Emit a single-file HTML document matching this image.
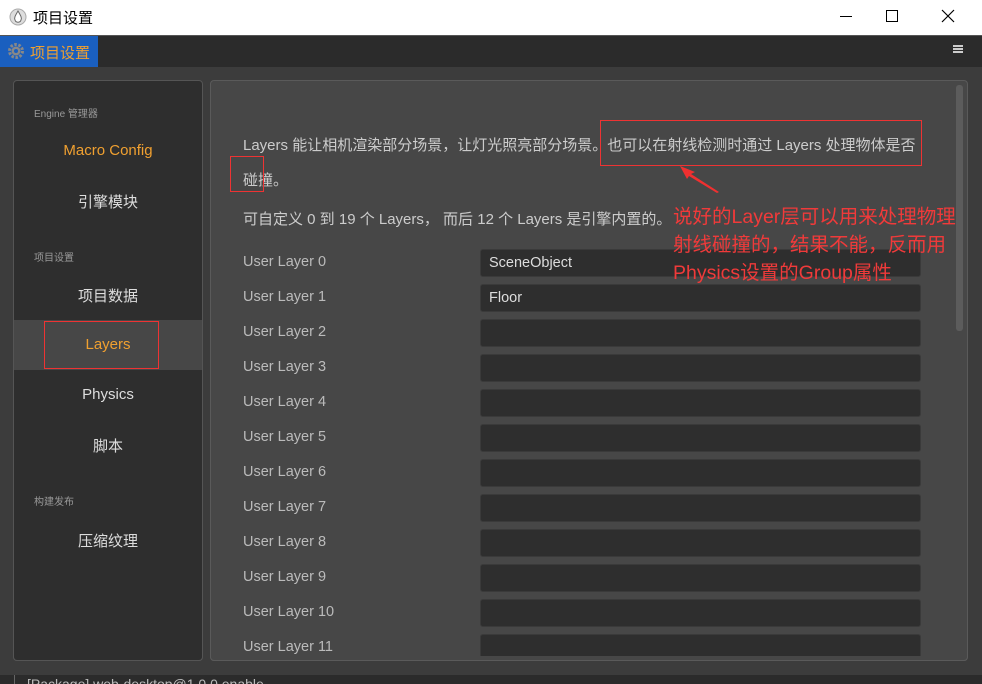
<!DOCTYPE html><html><head><meta charset="utf-8"><style>
*{margin:0;padding:0;box-sizing:border-box}
body{width:982px;height:684px;overflow:hidden;background:#3c3c3c;font-family:"Liberation Sans","Noto Sans CJK SC",sans-serif;position:relative}
.a{position:absolute}
.tb{left:0;top:0;width:982px;height:35px;background:#fff}
.tabs{left:0;top:35px;width:982px;height:32px;background:#2b2b2b;border-top:1px solid #555}
.left{left:13px;top:80px;width:190px;height:581px;background:#2e2e2e;border:1px solid #555;border-radius:4px}
.right{left:210px;top:80px;width:758px;height:581px;background:#474747;border:1px solid #5a5a5a;border-radius:4px}
.sec{font-size:10px;color:#999;left:34px}
.it{width:188px;left:14px;text-align:center;font-size:15px;color:#ddd}
.t{font-size:15px;color:#ccc;white-space:nowrap}
.lab{left:243px;font-size:14.5px;color:#bbb}
.in{left:480px;width:441px;height:28px;background:#2e2e2e;border:1px solid #3a3a3a;border-radius:3px;color:#ddd;font-size:14.5px;padding:5px 8px}
.red{border:1px solid #e33}
</style></head><body>
<div class="a tb"></div>
<svg class="a" style="left:9px;top:8px" width="18" height="18" viewBox="0 0 18 18"><circle cx="9" cy="9" r="8" fill="#ddd" stroke="#aaa"/><path d="M9 3 C6 8 5 10 6 12 C7 15 11 15 12 12 C13 10 12 8 9 3Z" fill="#fff" stroke="#666"/></svg>
<div class="a" style="left:33px;top:7px;font-size:15px;color:#000">项目设置</div>
<div class="a" style="left:840px;top:16px;width:12px;height:1px;background:#000"></div>
<div class="a" style="left:886px;top:10px;width:12px;height:12px;border:1px solid #000"></div>
<svg class="a" style="left:941px;top:9px" width="14" height="14"><path d="M1 1L13 13M13 1L1 13" stroke="#000" stroke-width="1.2"/></svg>
<div class="a tabs"></div>
<div class="a" style="left:0;top:36px;width:98px;height:31px;background:#1a5fbf"></div>
<svg class="a" style="left:7px;top:42px" width="18" height="18" viewBox="0 0 18 18"><circle cx="9" cy="9" r="6.5" fill="none" stroke="#888" stroke-width="3" stroke-dasharray="2.5 1.6"/><circle cx="9" cy="9" r="4.5" fill="#888"/><circle cx="9" cy="9" r="2" fill="#1a5fbf"/></svg>
<div class="a" style="left:30px;top:42px;font-size:15px;color:#f0a030">项目设置</div>
<div class="a" style="left:953px;top:45px;width:10px;height:8px;border-top:2px solid #ccc;border-bottom:2px solid #ccc"></div>
<div class="a" style="left:953px;top:48px;width:10px;height:2px;background:#ccc"></div>
<div class="a left"></div>
<div class="a sec" style="top:105px">Engine 管理器</div>
<div class="a it" style="top:142px;color:#f0a030">Macro Config</div>
<div class="a it" style="top:191px">引擎模块</div>
<div class="a sec" style="top:249px">项目设置</div>
<div class="a it" style="top:285px">项目数据</div>
<div class="a" style="left:14px;top:320px;width:188px;height:50px;background:#474747"></div>
<div class="a red" style="left:44px;top:321px;width:115px;height:48px"></div>
<div class="a it" style="top:336px;color:#f0a030">Layers</div>
<div class="a it" style="top:386px">Physics</div>
<div class="a it" style="top:435px">脚本</div>
<div class="a sec" style="top:493px">构建发布</div>
<div class="a it" style="top:530px">压缩纹理</div>
<div class="a right"></div>
<div class="a" style="left:956px;top:85px;width:7px;height:246px;background:#5c5c5c;border-radius:3px"></div>
<div class="a t" style="left:243px;top:134px">Layers 能让相机渲染部分场景，让灯光照亮部分场景。也可以在射线检测时通过 Layers 处理物体是否</div>
<div class="a t" style="left:243px;top:169px">碰撞。</div>
<div class="a red" style="left:600px;top:120px;width:322px;height:46px"></div>
<div class="a red" style="left:230px;top:156px;width:34px;height:36px"></div>
<div class="a t" style="left:243px;top:208px">可自定义 0 到 19 个 Layers， 而后 12 个 Layers 是引擎内置的。</div>
<div id="rows"></div>
<svg class="a" style="left:675px;top:163px" width="50" height="32"><path d="M5 3 L20 9 L16 11 L44 29 L42 30 L14 13 L12 16Z" fill="#f03030"/></svg>
<div class="a" style="left:673px;top:203px;font-size:19.5px;line-height:28px;color:#f03a3a;width:310px;white-space:nowrap">说好的Layer层可以用来处理物理<br>射线碰撞的，结果不能，反而用<br>Physics设置的Group属性</div>
<div class="a" style="left:0;top:675px;width:982px;height:9px;background:#2b2b2b"></div>
<div class="a" style="left:14px;top:675px;width:1px;height:9px;background:#666"></div>
<div class="a" style="left:27px;top:672px;font-size:14px;color:#bbb;line-height:14px;height:12px;overflow:hidden;padding-top:5px">[Package] web-desktop@1.0.0 enable</div>
<script>
var h='',v=['SceneObject','Floor'];
for(var i=0;i<12;i++){var y=249+i*35;h+='<div class="a lab" style="top:'+(y+5)+'px">User Layer '+i+'</div><div class="a in" style="top:'+y+'px">'+(v[i]||'')+'</div>';}
document.getElementById('rows').outerHTML=h;
</script>
<div class="a" style="left:0;top:661px;width:982px;height:14px;background:#3c3c3c"></div>
<div class="a" style="left:13px;top:656px;width:190px;height:5px;background:#2e2e2e;border:1px solid #555;border-top:none;border-radius:0 0 4px 4px"></div>
<div class="a" style="left:210px;top:656px;width:758px;height:5px;background:#474747;border:1px solid #5a5a5a;border-top:none;border-radius:0 0 4px 4px"></div>
</body></html>
